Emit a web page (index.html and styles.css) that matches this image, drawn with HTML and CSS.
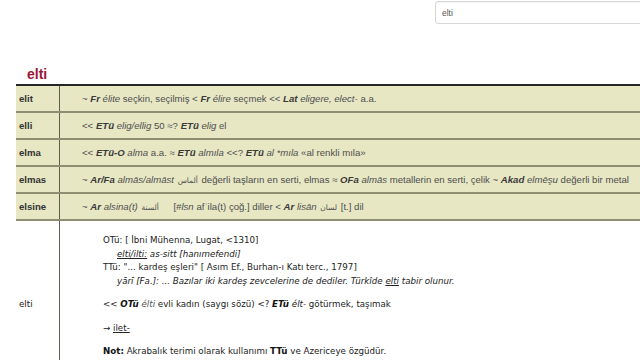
FILE: index.html
```html
<!DOCTYPE html>
<html lang="tr">
<head>
<meta charset="utf-8">
<title>elti</title>
<link rel="stylesheet" href="styles.css">
</head>
<body>
<header class="topbar">
  <input class="search" type="text" value="elti">
</header>
<main class="content">
  <h1 class="title">elti</h1>
  <table class="etym">
    <tr class="row">
      <td class="word">elit</td>
      <td class="def">~ <b>Fr</b> <i>élite</i> seçkin, seçilmiş &lt; <b>Fr</b> <i>élire</i> seçmek &lt;&lt; <b>Lat</b> <i>eligere, elect-</i> a.a.</td>
    </tr>
    <tr class="row">
      <td class="word">elli</td>
      <td class="def">&lt;&lt; <b>ETü</b> <i>elig/ellig</i> 50 ≈? <b>ETü</b> <i>elig</i> el</td>
    </tr>
    <tr class="row">
      <td class="word">elma</td>
      <td class="def">&lt;&lt; <b>ETü-O</b> <i>alma</i> a.a. ≈ <b>ETü</b> <i>almıla</i> &lt;&lt;? <b>ETü</b> <i>al *mıla</i> «al renkli mıla»</td>
    </tr>
    <tr class="row">
      <td class="word">elmas</td>
      <td class="def">~ <b>Ar/Fa</b> <i>almās/almāst</i> <span class="ar">ألماس</span> değerli taşların en serti, elmas ≈ <b>OFa</b> <i>almās</i> metallerin en serti, çelik ~ <b>Akad</b> <i>elmēşu</i> değerli bir metal</td>
    </tr>
    <tr class="row">
      <td class="word">elsine</td>
      <td class="def">~ <b>Ar</b> <i>alsina(t)</i> <span class="ar ar-wide">ألسنة</span> [<i>#lsn</i> afʿila(t) çoğ.] diller &lt; <b>Ar</b> <i>lisān</i> <span class="ar">لسان</span> [t.] dil</td>
    </tr>
    <tr class="row main-row">
      <td class="word">elti</td>
      <td class="main-def">
        <div class="block">
          <div>OTü: [ İbni Mühenna, Lugat, &lt;1310]</div>
          <div class="quote"><i><u>elti/ilti:</u> as-sitt [hanımefendi]</i></div>
          <div>TTü: "... kardeş eşleri" [ Asım Ef., Burhan-ı Katı terc., 1797]</div>
          <div class="quote"><i>yārī [Fa.]: ... Bazılar iki kardeş zevcelerine de dediler. Türkîde <u>elti</u> tabir olunur.</i></div>
        </div>
        <p class="para">&lt;&lt; <b class="bi">OTü</b> <i class="light">élti</i> evli kadın (saygı sözü) &lt;? <b class="bi">ETü</b> <i>élt-</i> götürmek, taşımak</p>
        <p class="para">→ <u>ilet-</u></p>
        <p class="para"><b>Not:</b> Akrabalık terimi olarak kullanımı <b>TTü</b> ve Azericeye özgüdür.</p>
      </td>
    </tr>
  </table>
</main>
</body>
</html>
```

FILE: styles.css
```css
html, body {
  margin: 0;
  padding: 0;
  background: #ffffff;
  overflow: hidden;
  width: 640px;
  height: 360px;
}

.topbar {
  display: flex;
  padding: 1px 0 0 435px;
  height: 24px;
  overflow: hidden;
}

.search {
  box-sizing: border-box;
  width: 230px;
  height: 23px;
  flex: none;
  border: 1px solid #d6d6d6;
  border-radius: 3px;
  padding: 0 6px;
  font-family: "Liberation Sans", Arial, sans-serif;
  font-size: 8.5px;
  color: #555;
  background: #fff;
  box-shadow: inset 0 1px 1px rgba(0, 0, 0, 0.05);
}

.content {
  padding-left: 16px;
  height: 335px;
  overflow: hidden;
}

.title {
  margin: 0;
  padding: 40px 0 0 11px;
  height: 19px;
  font-family: "Liberation Sans", Arial, sans-serif;
  font-size: 14px;
  font-weight: bold;
  line-height: 19px;
  color: #9d1636;
}

.etym {
  width: 760px;
  border-collapse: collapse;
  border-top: 2.5px solid #262626;
  font-family: "Liberation Sans", Arial, sans-serif;
  font-size: 9.6px;
  color: #4e4e4e;
}

.row td {
  background: #e7e7c4;
  height: 25px;
  padding: 0;
  border-bottom: 2px solid #8e8e73;
  vertical-align: middle;
}

.word {
  width: 40px;
  padding-left: 3px !important;
  font-weight: bold;
  color: #333;
  border-right: 1px solid #5e5e50;
}

.def {
  padding-left: 22px !important;
  white-space: nowrap;
}

.def b {
  color: #3a3a3a;
  font-style: italic;
}

.ar {
  font-family: "DejaVu Sans", sans-serif;
  font-size: 7.5px;
  margin: 0 1px;
}

.ar-wide {
  margin: 0 12px 0 1px;
}

.main-row td {
  background: #ffffff;
  border-bottom: none;
}

.main-row .word {
  font-family: "DejaVu Sans", sans-serif;
  font-weight: normal;
  font-size: 8.7px;
  color: #222;
}

.main-def {
  font-family: "DejaVu Sans", sans-serif;
  font-size: 8.7px;
  color: #222;
  line-height: 13.7px;
  white-space: nowrap;
  padding: 13px 0 29px 43px !important;
}

.main-def b {
  color: #111;
}

.main-def .bi {
  font-style: italic;
}

.block {
  margin: 0 0 9.5px;
}

.quote {
  padding-left: 14px;
}

.para {
  margin: 0 0 9.5px;
}

.para:last-child {
  margin-bottom: 0;
}

.light {
  color: #555;
}
```
